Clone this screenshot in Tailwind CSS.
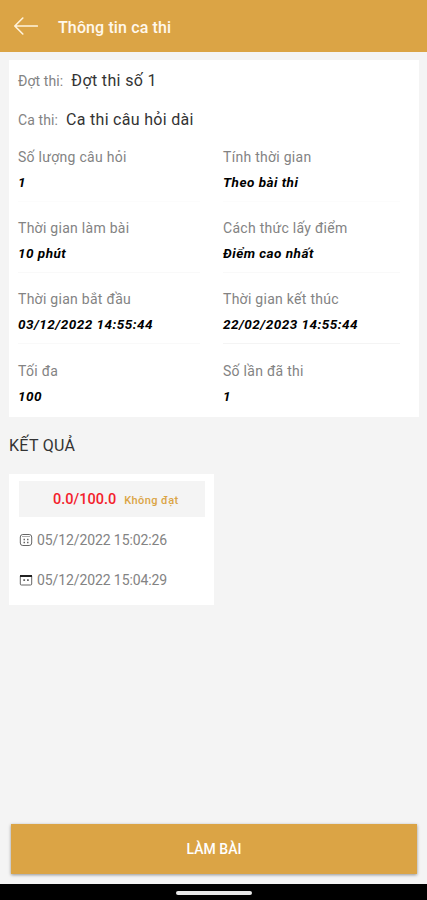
<!DOCTYPE html>
<html lang="vi">
<head>
    <meta charset="UTF-8">
    <meta name="viewport" content="width=device-width, initial-scale=1.0">
    <title>Thông tin ca thi</title>
    <script src="https://cdn.jsdelivr.net/npm/@tailwindcss/browser@4"></script>
</head>
<body class="bg-[#f4f4f4] font-['Roboto',sans-serif] text-[#838383]">

    <!-- Container -->
    <div class="flex flex-col h-screen overflow-hidden">

        <!-- Header -->
        <header class="flex items-center h-[52px] shrink-0 bg-[#dba445] text-[#fff8ec] pl-3.5 pt-0.5">
            <button class="w-6 h-6 -mt-0.5">
                <svg class="w-6 h-6" viewBox="0 0 24 24" fill="none" stroke="#fff3dc" stroke-width="1.6">
                    <path stroke-linecap="round" stroke-linejoin="round" d="M23.4 12H.8M8.8 4L.8 12l8 8" />
                </svg>
            </button>
            <h1 class="ml-5 mt-px text-[16px] leading-5 font-medium tracking-[0.12px]">Thông tin ca thi</h1>
        </header>

        <!-- Exam info -->
        <section class="mt-2 ml-[9px] mr-2 h-[357px] shrink-0 bg-white pl-[9px] pr-5 pt-[11px]">
            <p class="flex items-baseline h-[39px] text-[14px] leading-5 tracking-[0.1px]">
                Đợt thi:<span class="ml-2 text-[16px] text-[#333] tracking-[0.35px]">Đợt thi số 1</span>
            </p>
            <p class="flex items-baseline h-[37px] text-[14px] leading-5 tracking-[0.1px]">
                Ca thi:<span class="ml-2 text-[16px] text-[#333] tracking-[0.3px]">Ca thi câu hỏi dài</span>
            </p>
            <div class="grid grid-cols-[182px_177px] gap-x-[23px] text-[14px] leading-5 tracking-[0.28px]">
                <div class="h-[71px]">
                    <p>Số lượng câu hỏi</p>
                    <p class="mt-[5px] pb-[9px] border-b border-[#fcfcfc] font-bold italic text-black text-[13.5px] tracking-[0.48px]">1</p>
                </div>
                <div class="h-[71px]">
                    <p>Tính thời gian</p>
                    <p class="mt-[5px] pb-[9px] border-b border-[#fcfcfc] font-bold italic text-black text-[13.5px] tracking-[0.48px]">Theo bài thi</p>
                </div>
                <div class="h-[71px]">
                    <p>Thời gian làm bài</p>
                    <p class="mt-[5px] pb-[9px] border-b border-[#f9f9f9] font-bold italic text-black text-[13.5px] tracking-[0.48px]">10 phút</p>
                </div>
                <div class="h-[71px]">
                    <p>Cách thức lấy điểm</p>
                    <p class="mt-[5px] pb-[9px] border-b border-[#f9f9f9] font-bold italic text-black text-[13.5px] tracking-[0.48px]">Điểm cao nhất</p>
                </div>
                <div class="h-[72px]">
                    <p>Thời gian bắt đầu</p>
                    <p class="mt-[5px] pb-[9px] border-b border-[#f9f9f9] font-bold italic text-black text-[13.5px] tracking-[0.48px]">03/12/2022 14:55:44</p>
                </div>
                <div class="h-[72px]">
                    <p>Thời gian kết thúc</p>
                    <p class="mt-[5px] pb-[9px] border-b border-[#f4f4f4] font-bold italic text-black text-[13.5px] tracking-[0.48px]">22/02/2023 14:55:44</p>
                </div>
                <div>
                    <p>Tối đa</p>
                    <p class="mt-[5px] font-bold italic text-black text-[13.5px] tracking-[0.48px]">100</p>
                </div>
                <div>
                    <p>Số lần đã thi</p>
                    <p class="mt-[5px] font-bold italic text-black text-[13.5px] tracking-[0.48px]">1</p>
                </div>
            </div>
        </section>

        <!-- Results -->
        <h2 class="mt-[17px] ml-[9px] text-[16px] leading-6 text-[#333] tracking-[0.3px]">KẾT QUẢ</h2>
        <section class="mt-4 ml-[9px] w-[205px] h-[131px] shrink-0 bg-white px-2.5 pt-[7px]">
            <div class="flex items-baseline h-9 pt-[9px] pl-[34px] w-[186px] bg-[#f4f4f4]">
                <span class="text-[14.5px] leading-5 font-medium text-[#f3202b]">0.0/100.0</span>
                <span class="ml-2 text-[11px] font-medium text-[#dba445] tracking-[0.4px]">Không đạt</span>
            </div>
            <div class="flex items-center mt-[13px] h-5 text-[14px] tracking-[-0.1px]">
                <svg class="w-3.5 h-3.5" viewBox="0 0 14 14" fill="none" stroke="#666">
                    <rect x="1.3" y="1.5" width="11.4" height="11" rx="2.5" />
                    <path stroke="#aaa" d="M3 3.5h8" />
                    <path stroke-width="1.5" d="M4.5 6.5H6M8 6.5h1.5M4.5 9.5H6M8 9.5h1.5" />
                </svg>
                <span class="ml-1">05/12/2022 15:02:26</span>
            </div>
            <div class="flex items-center mt-5 h-5 text-[14px] tracking-[-0.1px]">
                <svg class="w-3.5 h-3.5" viewBox="0 0 14 14" fill="none" stroke="#666">
                    <rect x="1.3" y="2.5" width="11.4" height="9.5" rx="1" />
                    <path stroke="#222" stroke-width="2" d="M1 3h12" />
                    <path stroke-width="1.8" d="M4.3 7.2h1.8M8 7.2h1.8" />
                </svg>
                <span class="ml-1">05/12/2022 15:04:29</span>
            </div>
        </section>

        <!-- Start button -->
        <button class="mt-auto mb-2.5 ml-[11px] mr-[10px] h-[50px] shrink-0 bg-[#dba445] text-white text-[14px] font-medium shadow-[0_1px_3px_rgba(0,0,0,0.4)]">
            LÀM BÀI
        </button>

        <!-- Navigation bar -->
        <div class="flex justify-center h-4 shrink-0 bg-black pt-[7px]">
            <div class="w-[76px] h-[4px] rounded-sm bg-[#e8e8e8]"></div>
        </div>
    </div>
</body>
</html>
